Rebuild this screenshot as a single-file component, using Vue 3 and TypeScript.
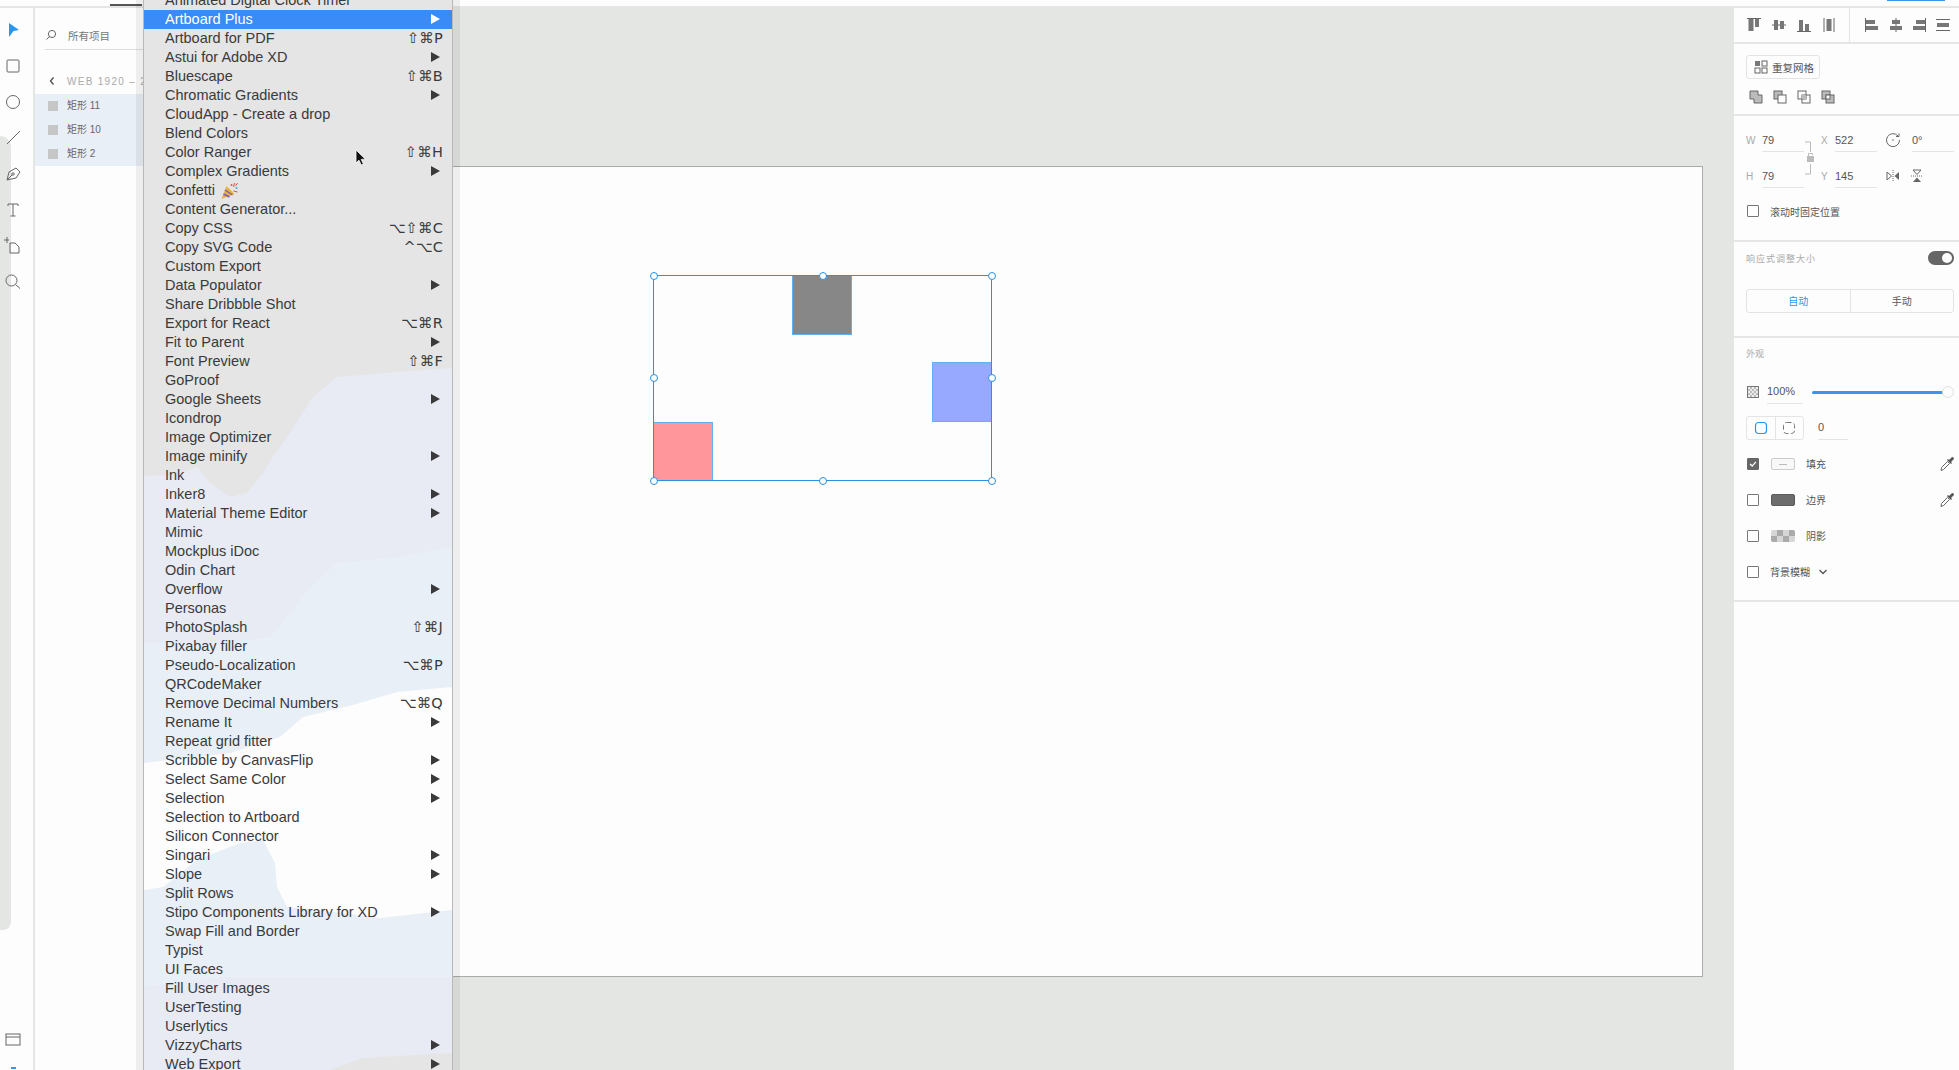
<template>
  <div class="app">
    <div class="topbar"><span class="tab-mark"></span><span class="top-blue"></span></div>
    <div class="workspace">
      <!-- tools -->
      <aside class="tools">
        <div class="tools-blob"></div>
        <svg class="tool" viewBox="0 0 20 20"><path d="M6 3 L16 10 L10.5 11 L6 17 Z" fill="#2b95ea" /></svg>
        <svg class="tool" viewBox="0 0 20 20"><rect x="4" y="4" width="12" height="12" rx="1" class="ln" /></svg>
        <svg class="tool" viewBox="0 0 20 20"><circle cx="10" cy="10" r="6.5" class="ln" /></svg>
        <svg class="tool" viewBox="0 0 20 20"><path d="M4 16 L17 3" class="ln" /></svg>
        <svg class="tool" viewBox="0 0 20 20"><path d="M4 16 L6 8 L13 4 L17 8 L13 14 Z M4 16 L9 11" class="ln" /><circle cx="10" cy="10" r="1.2" class="ln" /></svg>
        <svg class="tool" viewBox="0 0 20 20"><path d="M5 6 V4 H15 V6 M10 4 V16 M7.5 16 H12.5" class="ln" /></svg>
        <svg class="tool" viewBox="0 0 20 20"><path d="M7 7 H12 L16 11 V17 H7 Z M1 4 H6 M4 1 V7" class="ln" /></svg>
        <svg class="tool" viewBox="0 0 20 20"><circle cx="8.5" cy="8.5" r="5.5" class="ln" /><path d="M12.5 12.5 L17 16.5" class="ln" /></svg>
        <svg class="tool tool-bottom" viewBox="0 0 20 20"><rect x="3" y="4" width="14" height="11" class="ln" /><path d="M3 7 H17" class="ln" /></svg>
        <span class="tool-tip"></span>
      </aside>

      <!-- layers -->
      <aside class="layers">
        <div class="search">
          <svg class="search-icon" viewBox="0 0 12 12"><circle cx="7" cy="5" r="3.6" class="ln" /><path d="M4.5 7.5 L1.5 10.5" class="ln" /></svg>
          <span>所有项目</span>
        </div>
        <div class="crumb">
          <svg class="crumb-icon" viewBox="0 0 8 10"><path d="M5.5 1.5 L2.5 5 L5.5 8.5" fill="none" stroke="#555" stroke-width="1.4" /></svg>
          <span>WEB 1920 – 2</span>
        </div>
        <div v-for="layer in layers" :key="layer" class="layer">
          <span class="layer-swatch"></span>
          <span class="layer-name">{{ layer }}</span>
        </div>
      </aside>

      <!-- canvas -->
      <main class="canvas">
        <div class="artboard">
          <div class="shape shape-gray"></div>
          <div class="shape shape-blue"></div>
          <div class="shape shape-pink"></div>
          <div class="selection">
            <div class="handles">
              <span
                v-for="h in handles"
                :key="h.x + '-' + h.y"
                class="handle"
                :style="{ left: h.x + '%', top: h.y + '%' }"
              ></span>
            </div>
          </div>
        </div>
      </main>

      <!-- inspector -->
      <aside class="inspector">
        <section class="sec sec-align">
          <div class="align-group align-left">
            <svg class="ico" viewBox="0 0 16 16"><path d="M1 1.5 H15" class="ln" /><rect x="2.5" y="2" width="5" height="12" class="fl" /><rect x="9" y="2" width="4" height="8" class="fl" /></svg>
            <svg class="ico" viewBox="0 0 16 16"><path d="M1 8 H15" class="ln" /><rect x="3" y="3" width="4" height="10" class="fl" /><rect x="9" y="4" width="4" height="8" class="fl" /></svg>
            <svg class="ico" viewBox="0 0 16 16"><path d="M1 14.5 H15" class="ln" /><rect x="3" y="3" width="4" height="11" class="fl" /><rect x="9" y="7" width="4" height="7" class="fl" /></svg>
            <svg class="ico" viewBox="0 0 16 16"><path d="M3 1 V15 M13 1 V15" class="ln" /><rect x="5.5" y="2" width="5" height="12" class="fl" /></svg>
          </div>
          <div class="align-group align-right">
            <svg class="ico" viewBox="0 0 16 16"><path d="M1.5 1 V15" class="ln" /><rect x="2" y="3" width="9" height="4" class="fl" /><rect x="2" y="9" width="12" height="4" class="fl" /></svg>
            <svg class="ico" viewBox="0 0 16 16"><path d="M8 1 V15" class="ln" /><rect x="4" y="3" width="8" height="4" class="fl" /><rect x="2" y="9" width="12" height="4" class="fl" /></svg>
            <svg class="ico" viewBox="0 0 16 16"><path d="M14.5 1 V15" class="ln" /><rect x="5" y="3" width="9" height="4" class="fl" /><rect x="2" y="9" width="12" height="4" class="fl" /></svg>
            <svg class="ico" viewBox="0 0 16 16"><path d="M1 2.5 H15 M1 13.5 H15" class="ln" /><rect x="2" y="6" width="12" height="4" class="fl" /></svg>
          </div>
        </section>

        <section class="sec sec-grid">
          <button class="grid-btn">
            <svg class="ico-sm" viewBox="0 0 14 14"><rect x="1" y="1" width="5" height="5" class="fl" /><rect x="8" y="1" width="5" height="5" class="ln" /><rect x="1" y="8" width="5" height="5" class="ln" /><rect x="8" y="8" width="5" height="5" class="ln" /></svg>
            <span>重复网格</span>
          </button>
          <div class="bools">
            <svg class="ico" viewBox="0 0 16 16"><path d="M2 2 H10 V6 H14 V14 H6 V10 H2 Z" fill="#bbb" stroke="#666" /></svg>
            <svg class="ico" viewBox="0 0 16 16"><rect x="2" y="2" width="8" height="8" fill="#bbb" stroke="#666" /><rect x="6" y="6" width="8" height="8" fill="#fdfdfd" stroke="#666" /></svg>
            <svg class="ico" viewBox="0 0 16 16"><rect x="2" y="2" width="8" height="8" class="ln" /><rect x="6" y="6" width="8" height="8" class="ln" /><rect x="6" y="6" width="4" height="4" fill="#bbb" /></svg>
            <svg class="ico" viewBox="0 0 16 16"><rect x="2" y="2" width="8" height="8" fill="#bbb" stroke="#666" /><rect x="6" y="6" width="8" height="8" fill="#bbb" stroke="#666" /><rect x="6" y="6" width="4" height="4" fill="#fdfdfd" stroke="#666" /></svg>
          </div>
        </section>

        <section class="sec sec-size">
          <div class="size-grid">
            <span class="f-label">W</span><span class="f-val">79</span>
            <div class="lock">
              <svg viewBox="0 0 17 48" width="17" height="48"><path d="M1 8 H6.5 V18 M6.5 30 V40 H1" fill="none" stroke="#bbb" /><rect x="3" y="22" width="7" height="6" fill="#bbb" /><path d="M4.5 22 V19.5 H8.5 V21" fill="none" stroke="#bbb" /></svg>
            </div>
            <span class="f-label">X</span><span class="f-val">522</span>
            <svg class="ico cell-ico" viewBox="0 0 16 16"><path d="M13 4 A6.5 6.5 0 1 0 14.5 8" class="ln" /><path d="M11 4.5 H14 V1.5" class="ln" /><circle cx="8" cy="8" r="0.8" fill="#666" /></svg>
            <span class="f-val">0°</span>

            <span class="f-label">H</span><span class="f-val">79</span>
            <span class="f-label">Y</span><span class="f-val">145</span>
            <div class="flips">
              <svg class="ico" viewBox="0 0 16 16"><path d="M8 2 V14" stroke="#666" stroke-dasharray="1 1" /><path d="M2 4 V12 L6.5 8 Z" class="ln" /><path d="M14 4 V12 L9.5 8 Z" fill="#666" /></svg>
              <svg class="ico" viewBox="0 0 16 16"><path d="M2 8 H14" stroke="#666" stroke-dasharray="1 1" /><path d="M4 2 H12 L8 6.5 Z" class="ln" /><path d="M4 14 H12 L8 9.5 Z" fill="#666" /></svg>
            </div>
          </div>
          <label class="check-row">
            <span class="check"></span>
            <span class="check-text">滚动时固定位置</span>
          </label>
        </section>

        <section class="sec sec-resp">
          <div class="resp-head">
            <span class="sec-title spaced">响应式调整大小</span>
            <span class="toggle"><i></i></span>
          </div>
          <div class="seg">
            <span class="seg-item seg-on">自动</span>
            <span class="seg-item">手动</span>
          </div>
        </section>

        <section class="sec sec-look">
          <span class="sec-title">外观</span>
          <div class="look-rows">
            <div class="row opacity">
              <span class="checker-ico"></span>
              <span class="under op-val">100%</span>
              <div class="slider"><i class="slider-fill"></i><i class="slider-thumb"></i></div>
            </div>
            <div class="row">
              <div class="corners">
                <span class="corner"><svg class="ico-sm" viewBox="0 0 14 14"><rect x="1.5" y="1.5" width="11" height="11" rx="3" fill="none" stroke="#2b95ea" stroke-width="1.2" /></svg></span>
                <span class="corner"><svg class="ico-sm" viewBox="0 0 14 14"><rect x="1.5" y="1.5" width="11" height="11" rx="3" fill="none" stroke="#777" stroke-dasharray="5 2.4" /></svg></span>
              </div>
              <span class="under radius-val">0</span>
            </div>
            <div v-for="item in looks" :key="item.label" class="row look">
              <span class="check" :class="{ checked: item.checked }">
                <svg v-if="item.checked" viewBox="0 0 12 12"><path d="M2.5 6 L5 8.5 L9.5 3.5" fill="none" stroke="#fff" stroke-width="1.6" /></svg>
              </span>
              <span class="swatch" :class="item.swatch"><i v-if="item.swatch === 'sw-fill'"></i></span>
              <span class="look-label">{{ item.label }}</span>
              <svg v-if="item.dropper" class="ico dropper" viewBox="0 0 16 16"><path d="M2 14.5 L2.5 11.5 L8.5 5.5 L10.5 7.5 L4.5 13.5 Z" fill="#fdfdfd" stroke="#666" /><path d="M8 4 L12 8 L13 7 L12 6 L14.5 3.5 A1.4 1.4 0 0 0 12.5 1.5 L10 4 L9 3 Z" fill="#555" /></svg>
            </div>
            <div class="row look">
              <span class="check"></span>
              <span class="look-label blur-label">背景模糊</span>
              <svg class="chev" viewBox="0 0 10 6"><path d="M1.5 1 L5 4.5 L8.5 1" fill="none" stroke="#555" stroke-width="1.3" /></svg>
            </div>
          </div>
        </section>
      </aside>
    </div>

    <!-- plugin menu -->
    <div class="menu">
      <svg class="menu-bg" viewBox="0 0 308 1079" preserveAspectRatio="none">
        <polygon class="bg-a" points="308,377 253,381 193,386 169,406 156,426 143,446 129,466 119,482 103,502 86,506 66,492 53,476 29,484 0,485 0,1079 308,1079" />
        <polygon class="bg-b" points="308,556 253,566 193,572 166,596 146,622 126,646 86,652 53,652 0,652 0,996 79,986 308,986" />
        <polygon class="bg-c" points="308,696 253,701 209,714 159,726 136,746 86,762 0,772 0,899 19,896 53,869 96,852 119,849 131,872 133,896 143,916 199,922 236,927 308,919" />
        <polygon class="bg-d" points="308,1062 219,1067 186,1079 308,1079" />
      </svg>
      <div
        v-for="(item, i) in menuItems"
        :key="item.name"
        class="menu-row"
        :class="{ active: i === 1 }"
      >
        <span class="menu-name">{{ item.name }}</span>
        <svg v-if="item.name === 'Confetti'" class="party" viewBox="0 0 20 18">
          <path d="M2 17 L7 4 L15 12 Z" fill="#e8b23a" />
          <path d="M4 12 L10 15 M5.5 8 L13 13" stroke="#7a5bc0" stroke-width="1.5" />
          <circle cx="12" cy="3" r="1" fill="#e2554f" />
          <circle cx="17" cy="6" r="1" fill="#4aa3df" />
          <path d="M15 1 L14 5 M18 10 L14 9 M18 1 L16 4" stroke="#d9534f" stroke-width="1" />
        </svg>
        <span v-if="item.keys" class="menu-keys">{{ item.keys }}</span>
        <span v-if="item.sub" class="menu-arrow"></span>
      </div>
    </div>

    <svg class="cursor" viewBox="0 0 12 18"><path d="M1 1 V14 L4 11.2 L6.2 16 L8.4 15 L6.2 10.4 L10.4 10.2 Z" fill="#111" stroke="#fff" stroke-width="0.8" /></svg>
  </div>
</template>

<script setup lang="ts">
interface MenuItem {
  name: string;
  keys?: string;
  sub?: boolean;
}

interface LookItem {
  label: string;
  swatch: string;
  checked: boolean;
  dropper: boolean;
}

const layers = ['矩形 11', '矩形 10', '矩形 2'];

const handles = [
  { x: 0, y: 0 }, { x: 50, y: 0 }, { x: 100, y: 0 },
  { x: 0, y: 50 }, { x: 100, y: 50 },
  { x: 0, y: 100 }, { x: 50, y: 100 }, { x: 100, y: 100 },
];

const looks: LookItem[] = [
  { label: '填充', swatch: 'sw-fill', checked: true, dropper: true },
  { label: '边界', swatch: 'sw-border', checked: false, dropper: true },
  { label: '阴影', swatch: 'sw-shadow', checked: false, dropper: false },
];

const menuItems: MenuItem[] = [
  { name: 'Animated Digital Clock Timer' },
  { name: 'Artboard Plus', sub: true },
  { name: 'Artboard for PDF', keys: '⇧⌘P' },
  { name: 'Astui for Adobe XD', sub: true },
  { name: 'Bluescape', keys: '⇧⌘B' },
  { name: 'Chromatic Gradients', sub: true },
  { name: 'CloudApp - Create a drop' },
  { name: 'Blend Colors' },
  { name: 'Color Ranger', keys: '⇧⌘H' },
  { name: 'Complex Gradients', sub: true },
  { name: 'Confetti' },
  { name: 'Content Generator...' },
  { name: 'Copy CSS', keys: '⌥⇧⌘C' },
  { name: 'Copy SVG Code', keys: '^⌥C' },
  { name: 'Custom Export' },
  { name: 'Data Populator', sub: true },
  { name: 'Share Dribbble Shot' },
  { name: 'Export for React', keys: '⌥⌘R' },
  { name: 'Fit to Parent', sub: true },
  { name: 'Font Preview', keys: '⇧⌘F' },
  { name: 'GoProof' },
  { name: 'Google Sheets', sub: true },
  { name: 'Icondrop' },
  { name: 'Image Optimizer' },
  { name: 'Image minify', sub: true },
  { name: 'Ink' },
  { name: 'Inker8', sub: true },
  { name: 'Material Theme Editor', sub: true },
  { name: 'Mimic' },
  { name: 'Mockplus iDoc' },
  { name: 'Odin Chart' },
  { name: 'Overflow', sub: true },
  { name: 'Personas' },
  { name: 'PhotoSplash', keys: '⇧⌘J' },
  { name: 'Pixabay filler' },
  { name: 'Pseudo-Localization', keys: '⌥⌘P' },
  { name: 'QRCodeMaker' },
  { name: 'Remove Decimal Numbers', keys: '⌥⌘Q' },
  { name: 'Rename It', sub: true },
  { name: 'Repeat grid fitter' },
  { name: 'Scribble by CanvasFlip', sub: true },
  { name: 'Select Same Color', sub: true },
  { name: 'Selection', sub: true },
  { name: 'Selection to Artboard' },
  { name: 'Silicon Connector' },
  { name: 'Singari', sub: true },
  { name: 'Slope', sub: true },
  { name: 'Split Rows' },
  { name: 'Stipo Components Library for XD', sub: true },
  { name: 'Swap Fill and Border' },
  { name: 'Typist' },
  { name: 'UI Faces' },
  { name: 'Fill User Images' },
  { name: 'UserTesting' },
  { name: 'Userlytics' },
  { name: 'VizzyCharts', sub: true },
  { name: 'Web Export', sub: true },
];
</script>

<style>
html, body {
  margin: 0;
  overflow: hidden;
}
</style>

<style scoped>
.app {
  position: relative;
  width: 1959px;
  height: 1070px;
  overflow: hidden;
  display: flex;
  flex-direction: column;
  background: #e4e6e4;
  font-family: "Liberation Sans", "Noto Sans CJK SC", sans-serif;
  color: #555;
}
.ln { fill: none; stroke: #666; stroke-width: 1; }
.fl { fill: #777; }

/* top strip */
.topbar {
  position: relative;
  height: 6px;
  background: #fdfdfd;
  border-bottom: 2px solid #e4e6e4;
}
.tab-mark {
  position: absolute;
  left: 110px;
  top: 4px;
  width: 32px;
  height: 2px;
  background: #555;
}
.top-blue {
  position: absolute;
  left: 1887px;
  top: 0;
  width: 58px;
  height: 1px;
  background: #3a96ee;
}

.workspace {
  flex: 1;
  display: flex;
  min-height: 0;
}

/* tools */
.tools {
  position: relative;
  width: 26px;
  flex: none;
  border-right: 2px solid #e4e6e4;
  background: #fdfdfd;
  display: flex;
  flex-direction: column;
  align-items: center;
  gap: 16px;
  padding: 12px 7px 1px 0;
  box-sizing: content-box;
}
.tools-blob {
  position: absolute;
  left: 0;
  top: 128px;
  width: 11px;
  height: 794px;
  background: #e4e6e4;
  border-radius: 0 14px 10px 0;
}
.tool {
  position: relative;
  width: 20px;
  height: 20px;
  flex: none;
}
.tool-bottom { margin-top: auto; }
.tool-tip {
  width: 5px;
  height: 2px;
  flex: none;
  margin-top: 1px;
  background: #3a96ee;
}

/* layers */
.layers {
  width: 109px;
  flex: none;
  background: #fdfdfd;
  font-size: 10px;
  overflow: hidden;
}
.search {
  display: flex;
  align-items: center;
  gap: 11px;
  height: 20px;
  margin: 17px 0 0 10px;
  padding-bottom: 4px;
  border-bottom: 1px solid #ddd;
  font-size: 10.5px;
  color: #777;
}
.search-icon { width: 12px; height: 12px; flex: none; }
.crumb {
  display: flex;
  align-items: center;
  gap: 11px;
  height: 24px;
  margin-top: 19px;
  padding-left: 13px;
  font-size: 10px;
  letter-spacing: 1.3px;
  color: #aaa;
  white-space: nowrap;
}
.crumb-icon { width: 8px; height: 10px; flex: none; }
.layer {
  display: flex;
  align-items: center;
  gap: 9px;
  height: 24px;
  padding-left: 13px;
  background: #e9eff6;
  color: #666;
}
.crumb + .layer { margin-top: 1px; }
.layer-swatch {
  width: 10px;
  height: 10px;
  background: #c6c6c6;
}
.layer-name { padding-bottom: 3px; }

/* canvas */
.canvas {
  flex: 1;
  min-width: 0;
  display: flex;
  justify-content: flex-end;
  align-items: flex-start;
  padding: 158px 31px 0 0;
}
.artboard {
  position: relative;
  width: 1402px;
  height: 811px;
  background: #fdfdfd;
  border: 1px solid #aaa;
  box-sizing: border-box;
}
.shape {
  position: absolute;
  width: 60px;
  height: 60px;
  box-sizing: border-box;
  border: 1px solid #62b0f0;
}
.shape-gray { left: 490px; top: 108px; background: #878787; }
.shape-blue { left: 630px; top: 195px; background: #97a9ff; }
.shape-pink { left: 351px; top: 255px; height: 59px; background: #ff969c; }
.selection {
  position: absolute;
  left: 351px;
  top: 108px;
  width: 339px;
  height: 206px;
  border: 1px solid #2a90e0;
  box-sizing: border-box;
}
.handles {
  position: absolute;
  inset: -0.5px;
}
.handle {
  position: absolute;
  width: 8px;
  height: 8px;
  margin: -4px 0 0 -4px;
  border: 1.5px solid #2a90e0;
  border-radius: 50%;
  background: #fdfdfd;
  box-sizing: border-box;
}

/* inspector */
.inspector {
  width: 225px;
  flex: none;
  background: #fdfdfd;
  overflow: hidden;
}
.sec {
  border-bottom: 2px solid #e4e6e4;
  box-sizing: content-box;
}
.ico { width: 16px; height: 16px; flex: none; }
.ico-sm { width: 14px; height: 14px; flex: none; }

.sec-align {
  display: flex;
  height: 34px;
}
.align-group {
  display: flex;
  align-items: center;
}
.align-left {
  width: 116px;
  padding-left: 12px;
  gap: 9px;
  border-right: 1px solid #e4e6e4;
  box-sizing: border-box;
}
.align-right {
  padding-left: 14px;
  gap: 7.5px;
}

.sec-grid {
  height: 59px;
  padding: 11px 0 0 12px;
}
.grid-btn {
  display: flex;
  align-items: center;
  gap: 4px;
  width: 74px;
  height: 24px;
  padding: 0 0 0 7px;
  border: 1px solid #e4e4e4;
  border-radius: 3px;
  background: transparent;
  color: #555;
  font: inherit;
  font-size: 10.5px;
  box-sizing: border-box;
}
.bools {
  display: flex;
  gap: 8px;
  margin-top: 10px;
  padding-left: 2px;
}

.sec-size {
  height: 112px;
  padding: 12px 0 0 12px;
}
.size-grid {
  display: grid;
  grid-template-columns: 16px 42px 17px 14px 42px 35px 42px;
  grid-auto-rows: 24px;
  row-gap: 12px;
  align-items: center;
  font-size: 11px;
}
.f-label {
  font-size: 10px;
  color: #aaa;
}
.f-val {
  height: 24px;
  line-height: 25px;
  border-bottom: 1px solid #e4e4e4;
  box-sizing: border-box;
  color: #555;
}
.lock {
  grid-column: 3;
  grid-row: 1 / 3;
  height: 48px;
}
.cell-ico { margin-left: 8px; }
.flips {
  grid-column: 6 / 8;
  display: flex;
  gap: 8px;
  padding-left: 8px;
}
.check-row {
  display: flex;
  align-items: center;
  gap: 11px;
  height: 24px;
  margin-top: 11px;
  padding-left: 1px;
}
.check-text { font-size: 10px; color: #555; }
.check {
  width: 12px;
  height: 12px;
  flex: none;
  border: 1px solid #777;
  border-radius: 1px;
  box-sizing: border-box;
  display: block;
}
.check.checked { background: #666; border-color: #666; }
.check svg { display: block; width: 10px; height: 10px; }

.sec-resp {
  height: 88px;
  padding: 6px 5px 0 12px;
  box-sizing: content-box;
}
.resp-head {
  display: flex;
  align-items: center;
  justify-content: space-between;
  height: 20px;
  margin-bottom: 21px;
}
.sec-title {
  font-size: 9px;
  color: #aaa;
  line-height: 14px;
  display: block;
}
.spaced { letter-spacing: 1px; padding-top: 2px; }
.toggle {
  position: relative;
  width: 26px;
  height: 14px;
  border-radius: 7px;
  background: #666;
}
.toggle i {
  position: absolute;
  right: 2px;
  top: 2px;
  width: 10px;
  height: 10px;
  border-radius: 50%;
  background: #fdfdfd;
}
.seg {
  display: flex;
  height: 24px;
  border: 1px solid #e4e4e4;
  border-radius: 3px;
  box-sizing: border-box;
}
.seg-item {
  flex: 1;
  display: flex;
  align-items: center;
  justify-content: center;
  font-size: 10px;
  color: #555;
  padding-bottom: 2px;
}
.seg-item + .seg-item { border-left: 1px solid #e4e4e4; }
.seg-on { color: #2b95ea; }

.sec-look {
  height: 253px;
  padding: 9px 5px 0 12px;
}
.look-rows {
  display: flex;
  flex-direction: column;
  gap: 12px;
  margin-top: 19px;
}
.row {
  display: flex;
  align-items: center;
  height: 24px;
  font-size: 11px;
}
.under {
  height: 24px;
  line-height: 23px;
  border-bottom: 1px solid #e4e4e4;
  box-sizing: border-box;
}
.checker-ico {
  width: 12px;
  height: 12px;
  margin-left: 1px;
  border: 1px solid #777;
  box-sizing: border-box;
  background: repeating-conic-gradient(#bbb 0 25%, #eee 0 50%) 0 0 / 4px 4px;
}
.op-val { width: 36px; margin-left: 8px; }
.slider {
  position: relative;
  width: 142px;
  height: 12px;
  margin-left: 9px;
}
.slider-fill {
  position: absolute;
  left: 0;
  right: 6px;
  top: 4.5px;
  height: 3px;
  border-radius: 2px;
  background: #3d94f0;
}
.slider-thumb {
  position: absolute;
  right: 0;
  top: 0;
  width: 12px;
  height: 12px;
  border: 1px solid #e0e0e0;
  border-radius: 50%;
  background: #fdfdfd;
  box-sizing: border-box;
}
.corners {
  display: flex;
  width: 58px;
  height: 24px;
  border: 1px solid #e4e4e4;
  border-radius: 3px;
  box-sizing: border-box;
}
.corner {
  flex: 1;
  display: flex;
  align-items: center;
  justify-content: center;
}
.corner + .corner { border-left: 1px solid #e4e4e4; }
.radius-val { width: 30px; margin-left: 14px; }
.look .check { margin-left: 1px; }
.swatch {
  width: 24px;
  height: 12px;
  margin-left: 12px;
  border-radius: 2px;
  box-sizing: border-box;
  display: flex;
  align-items: center;
  justify-content: center;
}
.sw-fill { border: 1px solid #ccc; background: #f8f8f8; }
.sw-fill i { width: 8px; height: 1px; background: #bbb; }
.sw-border { background: #6c6c6c; border: 1px solid #5a5a5a; }
.sw-shadow { background: repeating-conic-gradient(#aaa 0 25%, #d6d6d6 0 50%) 0 0 / 12px 12px; }
.look-label { margin-left: 11px; padding-bottom: 2px; font-size: 10px; color: #555; }
.blur-label { margin-left: 11px; }
.chev { width: 10px; height: 6px; margin-left: 8px; }
.dropper { margin-left: auto; margin-right: -1px; }

/* menu */
.menu {
  position: absolute;
  left: 144px;
  top: -9px;
  width: 308px;
  height: 1079px;
  background: #e4e5e4;
  box-shadow: 0 0 0 1px #b8b8b8, 0 0 0 8px rgba(0, 0, 0, 0.06);
  font-size: 14.5px;
  color: #3a3a3c;
}
.menu-bg {
  position: absolute;
  left: 0;
  top: 0;
  width: 100%;
  height: 100%;
}
.bg-a { fill: #e8ebf3; }
.bg-b { fill: #e9eff6; }
.bg-c { fill: #fdfdfd; }
.bg-d { fill: #e4e5e4; }
.menu-row {
  position: relative;
  display: flex;
  align-items: center;
  height: 19px;
  padding: 0 9px 2px 21px;
  box-sizing: border-box;
  white-space: nowrap;
}
.menu-row.active {
  background: #3a8af8;
  color: #fff;
}
.menu-name { flex: none; }
.party {
  width: 21px;
  height: 18px;
  margin: 0 0 -2px 4px;
  flex: none;
}
.menu-keys {
  margin-left: auto;
  font-family: "DejaVu Sans", "Liberation Sans", sans-serif;
  font-size: 14.5px;
  letter-spacing: 0.2px;
}
.menu-arrow {
  margin-left: auto;
  margin-right: 3px;
  width: 0;
  height: 0;
  border-left: 9px solid currentColor;
  border-top: 5.5px solid transparent;
  border-bottom: 5.5px solid transparent;
}

.cursor {
  position: absolute;
  left: 355px;
  top: 149px;
  width: 12px;
  height: 18px;
}
</style>
